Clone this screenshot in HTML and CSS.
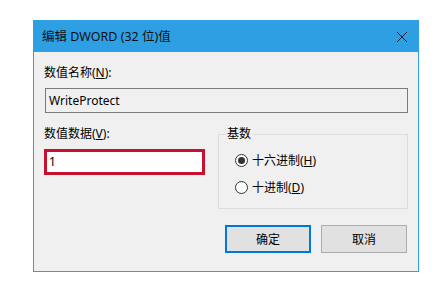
FILE: index.html
```html
<!DOCTYPE html>
<html lang="zh-CN">
<head>
<meta charset="utf-8">
<link rel="stylesheet" href="styles.css">
</head>
<body>
<div class="dialog">
  <div class="titlebar">
    <span class="title">编辑 DWORD (32 位)值</span>
    <svg class="close" width="12" height="12" viewBox="0 0 12 12"><path d="M1 1 L11 11 M11 1 L1 11" stroke="#1a1a1a" stroke-width="1" fill="none"/></svg>
  </div>
  <div class="body">
    <div class="label">数值名称(<u>N</u>):</div>
    <div class="name-input">WriteProtect</div>
    <div class="row">
      <div class="left">
        <div class="label">数值数据(<u>V</u>):</div>
        <div class="data-input">1</div>
      </div>
      <fieldset class="group">
        <legend class="legend">基数</legend>
        <div class="radio"><span class="dot checked"></span><span>十六进制(<u>H</u>)</span></div>
        <div class="radio"><span class="dot"></span><span>十进制(<u>D</u>)</span></div>
      </fieldset>
    </div>
    <div class="buttons">
      <div class="btn default">确定</div>
      <div class="btn">取消</div>
    </div>
  </div>
</div>
</body>
</html>
```
FILE: styles.css
```css
html, body {
  margin: 0;
  padding: 0;
  background: #ffffff;
}
body {
  font-family: "Noto Sans", "Noto Sans CJK SC", sans-serif;
  font-size: 12px;
  color: #000;
}
.dialog {
  box-sizing: border-box;
  width: 386px;
  height: 252px;
  margin: 20px 0 0 33px;
  border: 1px solid #2f9fe4;
  background: #f0f0f0;
  display: flex;
  flex-direction: column;
}
.titlebar {
  height: 31px;
  flex: none;
  background: #2f9fe4;
  display: flex;
  align-items: center;
  justify-content: space-between;
  padding: 0 10px 0 8px;
}
.title {
  font-size: 12.5px;
  line-height: 16px;
  color: #111;
}
.close {
  display: block;
}
.body {
  padding: 13px 10px 0 10px;
}
.label {
  line-height: 16px;
  height: 16px;
}
.name-input {
  box-sizing: border-box;
  margin: 7px 0 0 1px;
  height: 25px;
  border: 1px solid #7a7a7a;
  background: #f0f0f0;
  padding-left: 3px;
  line-height: 23px;
}
.row {
  display: flex;
  margin-top: 13px;
  gap: 13px;
}
.left {
  width: 161px;
  flex: none;
}
.data-input {
  box-sizing: border-box;
  margin-top: 7px;
  height: 26px;
  border: 3px solid #c8102e;
  background: #ffffff;
  padding-left: 2px;
  line-height: 20px;
}
.group {
  box-sizing: border-box;
  margin: 0;
  width: 190px;
  height: 83px;
  border: 1px solid #dcdcdc;
  padding: 10px 0 0 6px;
  min-width: 0;
}
.legend {
  margin: 0;
  padding: 0 2px;
  line-height: 16px;
}
.radio {
  display: flex;
  align-items: center;
  gap: 4px;
  height: 16px;
  margin: 0 0 11px 10px;
}
.dot {
  box-sizing: border-box;
  width: 13px;
  height: 13px;
  border: 1px solid #333;
  border-radius: 50%;
  background: #fff;
  display: flex;
  align-items: center;
  justify-content: center;
  flex: none;
}
.dot.checked::after {
  content: "";
  width: 7px;
  height: 7px;
  border-radius: 50%;
  background: #333;
}
.buttons {
  display: flex;
  justify-content: flex-end;
  gap: 10px;
  margin-top: 16px;
  margin-right: 1px;
}
.btn {
  box-sizing: border-box;
  width: 86px;
  height: 28px;
  border: 1px solid #adadad;
  background: #e1e1e1;
  display: flex;
  align-items: center;
  justify-content: center;
}
.btn.default {
  border: 2px solid #0078d7;
}
```
